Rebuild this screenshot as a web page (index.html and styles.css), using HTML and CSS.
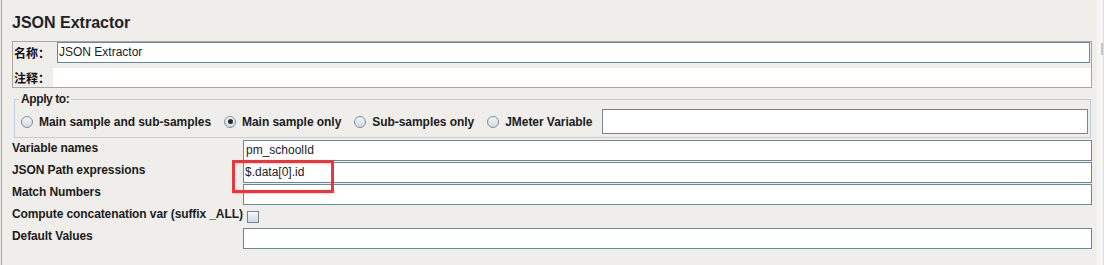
FILE: index.html
```html
<!DOCTYPE html>
<html>
<head>
<meta charset="utf-8">
<link rel="stylesheet" href="styles.css">
</head>
<body>
<div class="screen">
  <div class="panel">
    <h1 class="title">JSON Extractor</h1>

    <div class="namebox">
      <div class="name-row">
        <span class="cjk-label name-label">名称：</span>
        <div class="field name-field">JSON Extractor</div>
      </div>
      <div class="comment-row">
        <span class="cjk-label comment-label">注释：</span>
        <div class="comment-field"></div>
      </div>
    </div>

    <fieldset class="apply">
      <legend>Apply to:</legend>
      <div class="radio-row">
        <div class="radio"><span class="dot"></span>Main sample and sub-samples</div>
        <div class="radio"><span class="dot checked"></span>Main sample only</div>
        <div class="radio"><span class="dot"></span>Sub-samples only</div>
        <div class="radio last"><span class="dot"></span>JMeter Variable</div>
        <div class="field var-field"></div>
      </div>
    </fieldset>

    <div class="form">
      <div class="label">Variable names</div>
      <div class="field">pm_schoolId</div>

      <div class="label">JSON Path expressions</div>
      <div class="field marked">$.data[0].id<span class="mark"></span></div>

      <div class="label">Match Numbers</div>
      <div class="field"></div>

      <div class="label">Compute concatenation var (suffix _ALL)</div>
      <div class="check-cell"><span class="checkbox"></span></div>

      <div class="label">Default Values</div>
      <div class="field"></div>
    </div>
  </div>
  <div class="scroll"><div class="thumb"></div></div>
</div>
</body>
</html>
```

FILE: styles.css
```css
body{
    margin: 0;
    background: #efeeeb;
    font-family: "Liberation Sans", Arial, sans-serif;
    color: #1c1c1c;
}

.screen{
    display: flex;
    height: 265px;
    overflow: hidden;
}

.panel{
    flex: 1;
    margin-left: 1px;
    border-left: 1px solid #a3a3a3;
    padding: 0 5px 0 10px;
    display: flex;
    flex-direction: column;
}

.title{
    margin: 13px 0 0;
    font-size: 16px;
    line-height: 20px;
    font-weight: bold;
    color: #222;
}

/* name / comment box */
.namebox{
    margin-top: 8px;
    border: 1px solid #aaa69f;
    display: flex;
    flex-direction: column;
    gap: 5px;
}

.name-row,
.comment-row{
    display: flex;
    align-items: center;
}

.cjk-label{
    font-family: "Noto Sans CJK SC", "Liberation Sans", sans-serif;
    font-size: 12px;
    font-weight: bold;
    line-height: 14px;
    padding-left: 1px;
    box-sizing: border-box;
    color: #111;
}

.name-label{ width: 44px; }
.comment-label{ width: 40px; }

.field{
    box-sizing: border-box;
    height: 21px;
    background: #fff;
    border: 1px solid #73868e;
    padding: 0 2px;
    font-size: 12px;
    line-height: 19px;
    white-space: nowrap;
}

.name-field{
    flex: 1;
    margin-right: 1px;
    padding-left: 1px;
}

.comment-field{
    flex: 1;
    height: 19px;
    background: #fff;
}

/* apply to */
.apply{
    margin: 5px 1px 0 2px;
    padding: 3px 2px 3px 6px;
    border: 1px solid #b7d0e4;
    min-width: 0;
}

.apply legend{
    font-size: 12px;
    font-weight: bold;
    line-height: 13px;
    letter-spacing: -0.4px;
    padding: 0 2px;
    margin-left: -2px;
}

.radio-row{
    display: flex;
    align-items: center;
    height: 25px;
}

.radio{
    display: flex;
    align-items: center;
    gap: 6px;
    margin-right: 13px;
    font-size: 12px;
    font-weight: bold;
    letter-spacing: -0.05px;
    white-space: nowrap;
}

.radio.last{ margin-right: 9px; }

.dot{
    width: 12px;
    height: 12px;
    box-sizing: border-box;
    border-radius: 50%;
    border: 1px solid #7f919c;
    background: linear-gradient(#f3f5f7, #d3dbe1);
    display: flex;
    align-items: center;
    justify-content: center;
}

.dot.checked::after{
    content: "";
    width: 5px;
    height: 5px;
    border-radius: 50%;
    background: #2a2a2a;
}

.var-field{
    flex: 1;
    height: 25px;
}

/* form rows */
.form{
    margin-top: 2px;
    display: grid;
    grid-template-columns: 231px 1fr;
    grid-auto-rows: 21px;
    row-gap: 1px;
}

.label{
    font-size: 12px;
    font-weight: bold;
    line-height: 17px;
    letter-spacing: -0.1px;
    white-space: nowrap;
}

.marked{
    position: relative;
    padding-left: 1px;
}

.mark{
    position: absolute;
    left: -12px;
    top: -3px;
    width: 102px;
    height: 33px;
    box-sizing: border-box;
    border: 3px solid #e8363a;
}

.check-cell{
    display: flex;
    align-items: center;
}

.checkbox{
    width: 12px;
    height: 12px;
    box-sizing: border-box;
    margin-left: 4px;
    border: 1px solid #6f8796;
    background: linear-gradient(#f5f7f9, #d2dbe3);
}

/* right edge */
.scroll{
    width: 6px;
    background: #f6f6f5;
    border-right: 1px solid #dcdcdc;
    padding-top: 43px;
    display: flex;
    flex-direction: column;
    align-items: flex-end;
}

.thumb{
    width: 2px;
    height: 12px;
    background: #c6c6c6;
}
```
